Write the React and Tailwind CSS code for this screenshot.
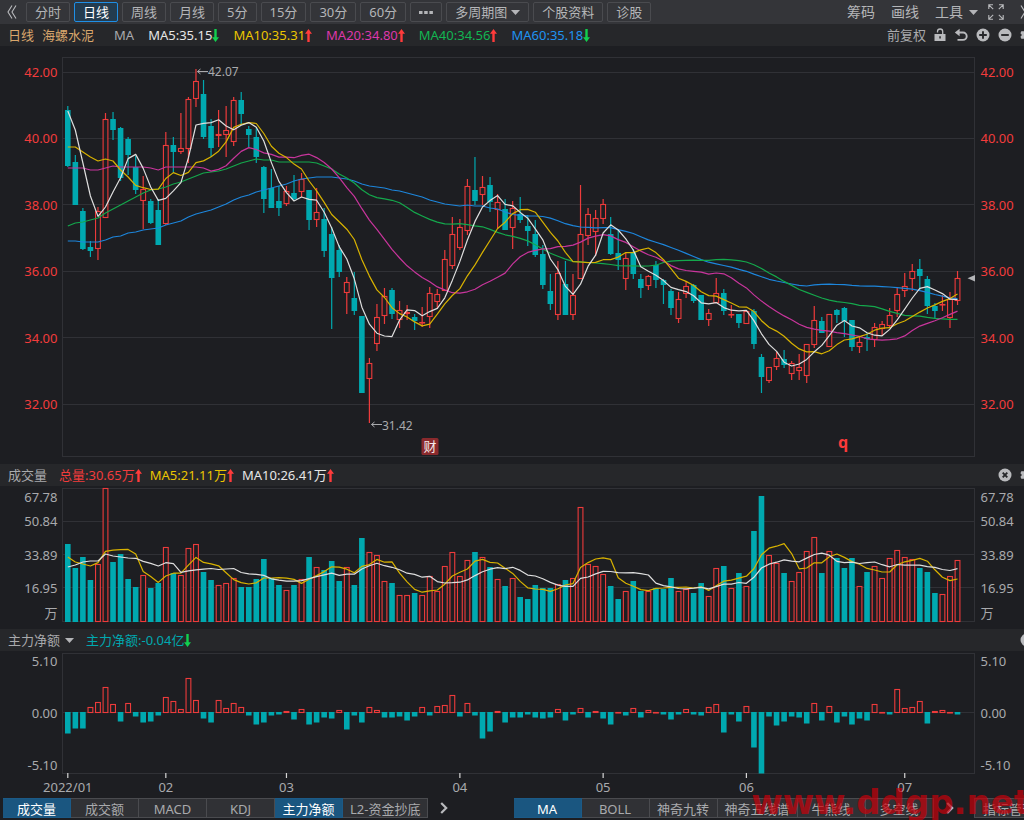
import { useState } from "react"
import clsx from "clsx"
import { FaCog } from "react-icons/fa"

const START_X = 67.8
const STEP = 7.54
const UP = "#ee3b3b"
const DOWN = "#00a9b0"
const GRID = "#303136"

// [rising, high, body top, body bottom, low] in chart units
const candles = [
  [0, 106, 110, 166, 167], [0, 155, 162, 205, 205], [0, 208, 211, 249, 250], [0, 241, 247, 251, 257],
  [1, 207, 211, 249, 260], [1, 113, 119, 218, 218], [0, 112, 119, 130, 140], [0, 127, 128, 178, 181],
  [0, 137, 139, 155, 175], [0, 156, 167, 190, 194], [1, 176, 189, 201, 229], [0, 199, 201, 223, 224],
  [0, 199, 210, 245, 245], [1, 132, 145, 224, 225], [0, 137, 145, 152, 173], [1, 113, 148, 152, 154],
  [1, 97, 99, 149, 163], [1, 69, 81, 99, 107], [0, 80, 94, 137, 139], [0, 119, 126, 148, 157],
  [1, 110, 134, 136, 147], [1, 106, 130, 135, 157], [1, 97, 100, 142, 146], [0, 92, 100, 114, 125],
  [0, 126, 129, 135, 147], [0, 128, 137, 157, 163], [0, 166, 167, 199, 213], [0, 169, 188, 208, 208],
  [0, 186, 201, 208, 216], [1, 186, 191, 204, 206], [0, 175, 193, 199, 201], [1, 173, 179, 192, 197],
  [0, 190, 190, 220, 230], [1, 188, 212, 220, 227], [0, 208, 219, 251, 257], [0, 227, 234, 278, 329],
  [0, 245, 250, 272, 277], [1, 277, 282, 293, 314], [0, 272, 298, 311, 315], [0, 316, 316, 393, 393],
  [1, 358, 363, 379, 423], [1, 304, 317, 344, 351], [1, 288, 296, 316, 324], [0, 288, 290, 314, 319],
  [1, 301, 310, 320, 328], [1, 305, 312, 314, 320], [0, 314, 317, 321, 330], [1, 307, 322, 323, 327],
  [1, 287, 293, 317, 328], [1, 289, 294, 302, 309], [1, 250, 259, 291, 291], [1, 217, 234, 266, 269],
  [1, 219, 227, 248, 250], [1, 179, 186, 231, 235], [0, 157, 190, 201, 205], [1, 176, 187, 195, 205],
  [0, 177, 185, 202, 212], [1, 194, 202, 210, 229], [0, 199, 209, 230, 230], [1, 201, 208, 228, 249],
  [0, 197, 214, 220, 223], [0, 215, 226, 231, 246], [0, 220, 234, 255, 257], [0, 245, 254, 285, 289],
  [0, 274, 291, 304, 310], [1, 261, 273, 315, 320], [0, 261, 284, 315, 315], [1, 274, 295, 315, 320],
  [1, 185, 234, 279, 279], [1, 208, 214, 236, 245], [1, 210, 218, 232, 256], [1, 199, 204, 219, 224],
  [0, 217, 234, 254, 255], [0, 229, 253, 260, 270], [1, 253, 258, 279, 290], [0, 249, 252, 274, 279],
  [0, 274, 279, 288, 298], [1, 275, 276, 286, 290], [0, 261, 265, 280, 288], [0, 279, 280, 285, 304],
  [0, 289, 291, 308, 315], [1, 292, 299, 319, 323], [1, 281, 286, 294, 298], [0, 284, 285, 301, 303],
  [0, 295, 295, 320, 320], [1, 309, 313, 320, 326], [1, 278, 293, 303, 303], [0, 289, 293, 311, 315],
  [1, 305, 314, 315, 318], [0, 314, 314, 323, 328], [1, 311, 311, 324, 324], [0, 309, 311, 344, 349],
  [0, 354, 357, 377, 393], [1, 367, 367, 381, 383], [1, 352, 358, 367, 370], [0, 350, 359, 365, 368],
  [1, 361, 363, 374, 380], [1, 354, 367, 371, 380], [1, 344, 344, 376, 383], [1, 306, 320, 345, 348],
  [0, 317, 321, 333, 333], [1, 314, 314, 347, 347], [0, 309, 310, 315, 323], [0, 307, 308, 321, 337],
  [0, 320, 320, 347, 351], [1, 337, 342, 347, 353], [0, 333, 337, 339, 351], [1, 323, 327, 340, 347],
  [1, 321, 324, 329, 336], [1, 308, 315, 326, 327], [1, 287, 294, 311, 317], [1, 273, 286, 291, 297],
  [1, 264, 271, 279, 291], [0, 259, 269, 276, 290], [0, 276, 279, 306, 314], [0, 303, 306, 311, 318],
  [1, 295, 304, 305, 311], [1, 292, 299, 318, 328], [1, 271, 278, 301, 305],
]

const volumes = [
  544, 568, 557, 580, 564, 488, 562, 554, 579, 587, 575, 588, 583, 547, 573, 575, 548, 544, 572, 580,
  585, 583, 578, 587, 587, 579, 559, 578, 585, 590, 585, 579, 557, 567, 570, 561, 581, 567, 585, 538,
  552, 555, 581, 583, 595, 595, 593, 595, 576, 591, 566, 552, 576, 560, 552, 557, 567, 579, 586, 578,
  597, 599, 585, 588, 588, 584, 580, 578, 507, 564, 566, 574, 586, 599, 591, 581, 591, 591, 588, 589,
  578, 591, 589, 593, 583, 596, 568, 566, 588, 573, 586, 531, 496, 555, 563, 573, 581, 572, 551, 537,
  573, 551, 558, 568, 558, 586, 572, 566, 578, 558, 550, 557, 559, 568, 572, 593, 594, 576, 560,
]

const flows = [
  -21, -16, -16, 5, 10, 25, 8, -9, 9, -4, -10, -9, -3, 15, 11, 3, 34, 12, -6, -10,
  12, 4, 9, 5, -3, -12, -10, -3, -2, 1, -7, 3, -12, -10, -5, -6, 2, -17, -3, -10,
  5, 2, -5, -5, -4, -8, -4, 5, -3, 6, 7, 17, -4, 9, -3, -26, -19, 1, -10, -5,
  -5, -2, -5, -6, -5, 3, -8, -2, 4, -5, 1, -6, -12, 0, -3, 4, -5, 2, 0, -2,
  -7, -2, 3, -2, -3, 5, 8, -20, -2, -9, 6, -35, -61, -4, -13, -9, -4, -5, -11, 9,
  -8, 6, -10, -4, -12, -6, -8, 8, 0, -2, 23, 4, 5, 11, -11, 1, 2, 0, -2,
]

// averages for the days before the window is full
const lead5 = [111, 130, 163, 196]
const lead10 = [147, 147, 152, 157, 161, 159, 161, 170, 177]
const lead20 = [168, 168, 168, 170, 170, 168, 166, 167, 167, 167, 167, 168, 170, 167, 167, 167, 167, 167, 168]
const lead40 = [
  226, 223, 222, 220, 218, 213, 209, 205, 201, 197, 193, 190, 189, 187, 184, 182, 179, 176, 173, 172,
  171, 169, 166, 163, 161, 159, 160, 160, 162, 162, 162, 162, 162, 163, 166, 169, 174, 178, 183,
]
const lead60 = [
  241, 241, 242, 242, 242, 240, 237, 236, 233, 232, 230, 229, 228, 225, 223, 221, 217, 214, 212, 210,
  207, 204, 200, 197, 195, 192, 190, 188, 186, 184, 181, 179, 178, 177, 177, 177, 178, 179, 181, 184,
  186, 187, 188, 190, 191, 193, 195, 197, 200, 202, 204, 205, 206, 205, 206, 206, 208, 209, 212,
]
const volLead5 = [557, 562, 564, 566]
const volLead10 = [567, 565, 562, 561, 561, 554, 556, 557, 558]

const closes = candles.map(([up, , top, bottom]) => (up ? top : bottom))
const xAt = (i) => START_X + i * STEP

const average = (data, days, lead) =>
  data.map((_, i) => {
    if (i < days - 1) return lead[i]
    const slice = data.slice(i - days + 1, i + 1)
    return slice.reduce((a, b) => a + b, 0) / days
  })

const Line = ({ values, color }) => (
  <polyline
    fill="none"
    stroke={color}
    strokeWidth="1.2"
    strokeLinejoin="round"
    points={values.map((v, i) => `${xAt(i).toFixed(1)},${v.toFixed(1)}`).join(" ")}
  />
)

const Bar = ({ i, up, top, bottom }) => {
  const height = Math.max(bottom - top, 1)
  if (up) {
    return (
      <rect
        x={xAt(i) - 2.4}
        y={top + 0.5}
        width="4.8"
        height={Math.max(height - 1, 0.5)}
        fill="#1d1e22"
        stroke={UP}
        strokeWidth="1.1"
      />
    )
  }
  return <rect x={xAt(i) - 2.8} y={top} width="5.6" height={height} fill={DOWN} />
}

const Frame = ({ top, bottom, rows }) => (
  <g stroke={GRID} fill="none">
    <rect x="62.5" y={top} width="912" height={bottom - top} />
    {rows.map((y) => (
      <line key={y} x1="62.5" x2="974.5" y1={y} y2={y} />
    ))}
  </g>
)

const Axis = ({ labels, color }) => (
  <g fill={color} fontSize="13">
    {labels.map(([text, y]) => (
      <g key={text}>
        <text x="57.5" y={y} textAnchor="end">{text}</text>
        <text x="980.5" y={y}>{text}</text>
      </g>
    ))}
  </g>
)

const PriceChart = () => (
  <svg viewBox="0 46 1024 418" className="block h-auto w-full" role="img" aria-label="日线 海螺水泥">
    <Frame top={57.5} bottom={456.5} rows={[72.5, 138.5, 204.5, 271.5, 337.5, 404.5]} />
    <Axis
      color="#f23c3c"
      labels={[["42.00", 77], ["40.00", 143], ["38.00", 210], ["36.00", 276], ["34.00", 343], ["32.00", 409]]}
    />
    {candles.map(([up, high, top, bottom, low], i) => (
      <g key={i}>
        <line x1={xAt(i)} x2={xAt(i)} y1={high} y2={low} stroke={up ? UP : DOWN} strokeWidth="1.2" />
        <Bar i={i} up={up} top={top} bottom={bottom} />
      </g>
    ))}
    <Line values={average(closes, 60, lead60)} color="#1d86dc" />
    <Line values={average(closes, 40, lead40)} color="#14a84c" />
    <Line values={average(closes, 20, lead20)} color="#c8359c" />
    <Line values={average(closes, 10, lead10)} color="#d8b200" />
    <Line values={average(closes, 5, lead5)} color="#dedede" />

    <g stroke="#a9aaad" fill="none">
      <path d="M208 71.5H197.500M200.500 69l-3 2.500 3 2.500" />
      <path d="M382 424.500H371.500M374.500 422l-3 2.500 3 2.500" />
    </g>
    <g fill="#a9aaad" fontSize="12">
      <text x="208" y="76">42.07</text>
      <text x="382" y="430">31.42</text>
    </g>
    <path d="M975 275v6.500l-7.500-3.200z" fill="#b4b5b8" />

    <rect x="421.500" y="438" width="17" height="17" rx="1.500" fill="#8a2a2d" />
    <text x="430" y="451" textAnchor="middle" fontSize="13" fill="#f5eaea">财</text>
    <text x="843" y="448" textAnchor="middle" fontSize="16" fontWeight="700" fill="#fb3a3a">q</text>
  </svg>
)

const VolumeChart = () => (
  <svg viewBox="0 486 1024 143" className="block h-auto w-full" role="img" aria-label="成交量">
    <Frame top={488.5} bottom={621.5} rows={[521.5, 554.5, 587.5]} />
    <Axis
      color="#a9aaad"
      labels={[["67.78", 502], ["50.84", 526], ["33.89", 560], ["16.95", 593], ["万", 618]]}
    />
    {volumes.map((top, i) => (
      <Bar key={i} i={i} up={candles[i][0]} top={top} bottom={622} />
    ))}
    <Line values={average(volumes, 5, volLead5)} color="#d8b200" />
    <Line values={average(volumes, 10, volLead10)} color="#dedede" />
  </svg>
)

const months = [["2022/01", 0], ["02", 13], ["03", 29], ["04", 52], ["05", 71], ["06", 90], ["07", 111]]

const FlowChart = () => (
  <svg viewBox="0 651 1024 147" className="block h-auto w-full" role="img" aria-label="主力净额">
    <Frame top={653.5} bottom={773.5} rows={[712.5]} />
    <Axis color="#a9aaad" labels={[["5.10", 666], ["0.00", 718], ["-5.10", 770]]} />
    {flows.map((v, i) => (
      <Bar key={i} i={i} up={v >= 0} top={v >= 0 ? 712 - v : 712} bottom={v >= 0 ? 713 : 712.5 - v} />
    ))}
    {months.map(([text, i]) => (
      <g key={text}>
        <line x1={xAt(i)} x2={xAt(i)} y1="773" y2="778" stroke="#d5d5d5" strokeWidth="1.200" />
        <text x={xAt(i)} y="792" textAnchor="middle" fontSize="13" fill="#a9aaad">{text}</text>
      </g>
    ))}
  </svg>
)

const Arrow = ({ up }) => (
  <svg viewBox="0 0 7 13" className={clsx("h-[13px] w-[7px] shrink-0", up ? "text-[#ff3b3b]" : "rotate-180 text-[#12cf4e]")}>
    <path d="M3.500 0 7 4.800H4.700V13H2.300V4.800H0z" fill="currentColor" />
  </svg>
)

const Caret = () => (
  <svg viewBox="0 0 9 5" className="h-[5px] w-[9px] shrink-0">
    <path d="M0 0h9L4.500 5z" fill="#b4b5b8" />
  </svg>
)

const Reading = ({ className, text, up }) => (
  <span className={clsx("flex items-center whitespace-nowrap", className)}>
    {text}
    <Arrow up={up} />
  </span>
)

const IconButton = ({ label, className, children }) => (
  <button type="button" aria-label={label} className={clsx("flex shrink-0 items-center justify-center text-[#b9babd]", className)}>
    {children}
  </button>
)

const CloseIcon = () => (
  <svg viewBox="0 0 14 14" className="size-[14px]">
    <circle cx="7" cy="7" r="6.500" fill="currentColor" />
    <path d="m4.700 4.700 4.600 4.600m0-4.600-4.600 4.600" stroke="#26272a" strokeWidth="1.900" />
  </svg>
)

const periods = ["分时", "日线", "周线", "月线", "5分", "15分", "30分", "60分"]

const periodClass = "flex h-5 shrink-0 items-center rounded-[2px] border px-2 whitespace-nowrap"

const Toolbar = () => {
  const [period, setPeriod] = useState("日线")

  return (
    <div className="flex h-6 items-center justify-between bg-[#343539] text-[#b4b5b8]">
      <div className="flex items-center gap-1">
        <IconButton label="收起" className="w-[22px] pl-0.5">
          <svg viewBox="0 0 10 14" className="h-[14px] w-[10px]" fill="none" stroke="currentColor" strokeWidth="1.100">
            <path d="M5 .5 1 7l4 6.500M9 .5 5 7l4 6.500" />
          </svg>
        </IconButton>
        {periods.map((name) => (
          <button
            key={name}
            type="button"
            onClick={() => setPeriod(name)}
            className={clsx(
              periodClass,
              name === period ? "border-[#1f8fe6] bg-[#233c50] text-white" : "border-[#4a4b4f]"
            )}
          >
            {name}
          </button>
        ))}
        <button type="button" aria-label="更多周期" className={clsx(periodClass, "border-[#4a4b4f]")}>
          <svg viewBox="0 0 14 3" className="h-[3px] w-[14px]" fill="currentColor">
            <path d="M0 0h3.500v3H0zM5.200 0h3.500v3H5.200zM10.400 0h3.500v3h-3.500z" />
          </svg>
        </button>
        <button type="button" aria-haspopup="menu" className={clsx(periodClass, "gap-1 border-[#4a4b4f]")}>
          多周期图
          <Caret />
        </button>
        <button type="button" className={clsx(periodClass, "border-[#4a4b4f]")}>个股资料</button>
        <button type="button" className={clsx(periodClass, "border-[#4a4b4f]")}>诊股</button>
      </div>
      <div className="-mr-2 flex shrink-0 items-center gap-4 text-sm">
        <button type="button">筹码</button>
        <button type="button">画线</button>
        <button type="button" aria-haspopup="menu" className="flex items-center gap-1.5">
          工具
          <Caret />
        </button>
        <IconButton label="全屏" className="-ml-1.5">
          <svg viewBox="0 0 16 16" className="size-4" fill="none" stroke="currentColor" strokeWidth="1.100">
            <path d="M5 .8H.8V5M.8.8l4.400 4.400M11 .8h4.200V5M15.200.8l-4.400 4.400M5 15.200H.8V11M.8 15.200l4.400-4.400M11 15.200h4.200V11M15.200 15.200l-4.400-4.400" />
          </svg>
        </IconButton>
        <IconButton label="展开">
          <svg viewBox="0 0 12 14" className="h-[14px] w-3" fill="none" stroke="currentColor" strokeWidth="1.100">
            <path d="m1 .5 4 6.500-4 6.500M6 .5 10 7l-4 6.500" />
          </svg>
        </IconButton>
      </div>
    </div>
  )
}

const PriceHeader = () => (
  <div className="flex h-[22px] items-center justify-between bg-[#26272a] pl-2">
    <div className="flex items-center gap-3.5 whitespace-nowrap">
      <div className="mr-1.5 flex gap-2 text-[#d9a66c]">
        <span>日线</span>
        <span>海螺水泥</span>
      </div>
      <span>MA</span>
      <Reading className="text-[#e6e6e6]" text="MA5:35.15" />
      <Reading className="text-[#ecc500]" text="MA10:35.31" up />
      <Reading className="text-[#dd38ab]" text="MA20:34.80" up />
      <Reading className="text-[#12b552]" text="MA40:34.56" up />
      <Reading className="text-[#1f93f0]" text="MA60:35.18" />
    </div>
    <div className="-mr-2 flex shrink-0 items-center gap-2">
      <button type="button">前复权</button>
      <IconButton label="锁定">
        <svg viewBox="0 0 12 14" className="h-[14px] w-3">
          <path d="M3.500 4.500V3.600a2.600 2.600 0 0 1 5.200 0V6" fill="none" stroke="currentColor" strokeWidth="1.300" />
          <path d="M.5 6h11v7H.5z" fill="currentColor" />
          <path d="M5.300 8.200h1.500v2.300H5.300z" fill="#26272a" />
        </svg>
      </IconButton>
      <IconButton label="撤销">
        <svg viewBox="0 0 14 14" className="size-[14px]">
          <path d="M4 4.500h5a3.700 3.700 0 0 1 0 7.400H3.500" fill="none" stroke="currentColor" strokeWidth="1.900" />
          <path d="M.8 4.500 5.600.8v7.400z" fill="currentColor" />
        </svg>
      </IconButton>
      <IconButton label="放大">
        <svg viewBox="0 0 14 14" className="size-[14px]">
          <circle cx="7" cy="7" r="6.500" fill="currentColor" />
          <path d="M3.200 7h7.600M7 3.200v7.600" stroke="#26272a" strokeWidth="1.900" />
        </svg>
      </IconButton>
      <IconButton label="缩小">
        <svg viewBox="0 0 14 14" className="size-[14px]">
          <circle cx="7" cy="7" r="6.500" fill="currentColor" />
          <path d="M3.200 7h7.600" stroke="#26272a" strokeWidth="1.900" />
        </svg>
      </IconButton>
      <IconButton label="设置">
        <FaCog size={12} />
      </IconButton>
    </div>
  </div>
)

const VolumeHeader = () => (
  <div className="flex h-[22px] items-center justify-between bg-[#26272a] pl-2">
    <div className="flex items-center gap-2 whitespace-nowrap">
      <span className="mr-1">成交量</span>
      <Reading className="text-[#f23c3c]" text="总量:30.65万" up />
      <Reading className="text-[#ecc500]" text="MA5:21.11万" up />
      <Reading className="text-[#e6e6e6]" text="MA10:26.41万" up />
    </div>
    <div className="-mr-2 flex shrink-0 items-center gap-2">
      <IconButton label="关闭成交量">
        <CloseIcon />
      </IconButton>
      <IconButton label="设置成交量">
        <FaCog size={12} />
      </IconButton>
    </div>
  </div>
)

const FlowHeader = () => (
  <div className="flex h-[22px] items-center justify-between bg-[#26272a] pl-2">
    <div className="flex items-center gap-3 whitespace-nowrap">
      <div className="flex items-center gap-1">
        <select aria-label="指标" className="appearance-none bg-transparent">
          <option>主力净额</option>
        </select>
        <Caret />
      </div>
      <Reading className="text-[#00a9b0]" text="主力净额:-0.04亿" />
    </div>
    <div className="-mr-2.5 flex shrink-0">
      <IconButton label="关闭主力净额">
        <CloseIcon />
      </IconButton>
    </div>
  </div>
)

const TabGroup = ({ names, initial }) => {
  const [active, setActive] = useState(initial)

  const toggle = (name) =>
    setActive(active.includes(name) ? active.filter((n) => n !== name) : [...active, name])

  return (
    <div className="flex items-center">
      {names.map((name) => (
        <button
          key={name}
          type="button"
          onClick={() => toggle(name)}
          className={clsx(
            "h-5 min-w-[68px] border border-l-0 px-[7px] whitespace-nowrap",
            active.includes(name)
              ? "border-[#1b5a87] bg-[#1a5680] text-white"
              : "border-[#4a4b4f] bg-[#303135] text-[#a9aaad]"
          )}
        >
          {name}
        </button>
      ))}
      <IconButton label="更多指标" className="ml-3 w-2">
        <svg viewBox="0 0 8 12" className="h-3 w-2" fill="none" stroke="currentColor" strokeWidth="2.200">
          <path d="m1.200 1 5 5-5 5" />
        </svg>
      </IconButton>
    </div>
  )
}

const BottomTabs = () => (
  <div className="flex items-center pb-0.5 pl-[3px]">
    <div className="w-1/2 shrink-0">
      <TabGroup
        names={["成交量", "成交额", "MACD", "KDJ", "主力净额", "L2-资金抄底"]}
        initial={["成交量", "主力净额"]}
      />
    </div>
    <TabGroup names={["MA", "BOLL", "神奇九转", "神奇五线谱", "牛熊线", "多空线"]} initial={["MA"]} />
    <button type="button" className="ml-auto -mr-5 h-5 shrink-0 border border-[#4a4b4f] bg-[#303135] px-2 whitespace-nowrap">
      指标管理
    </button>
  </div>
)

export default function App() {
  return (
    <div className="relative min-h-screen overflow-hidden bg-[#1d1e22] font-['Noto_Sans','Noto_Sans_CJK_SC',sans-serif] text-[13px] leading-5 text-[#a9aaad]">
      <Toolbar />
      <PriceHeader />
      <PriceChart />
      <VolumeHeader />
      <VolumeChart />
      <FlowHeader />
      <FlowChart />
      <BottomTabs />
      <div className="pointer-events-none absolute -right-1.5 -bottom-0.5 font-['DejaVu_Sans',sans-serif] text-[34px] leading-10 font-bold text-[#c8000a]/70">
        www.ddgp.net
      </div>
    </div>
  )
}
